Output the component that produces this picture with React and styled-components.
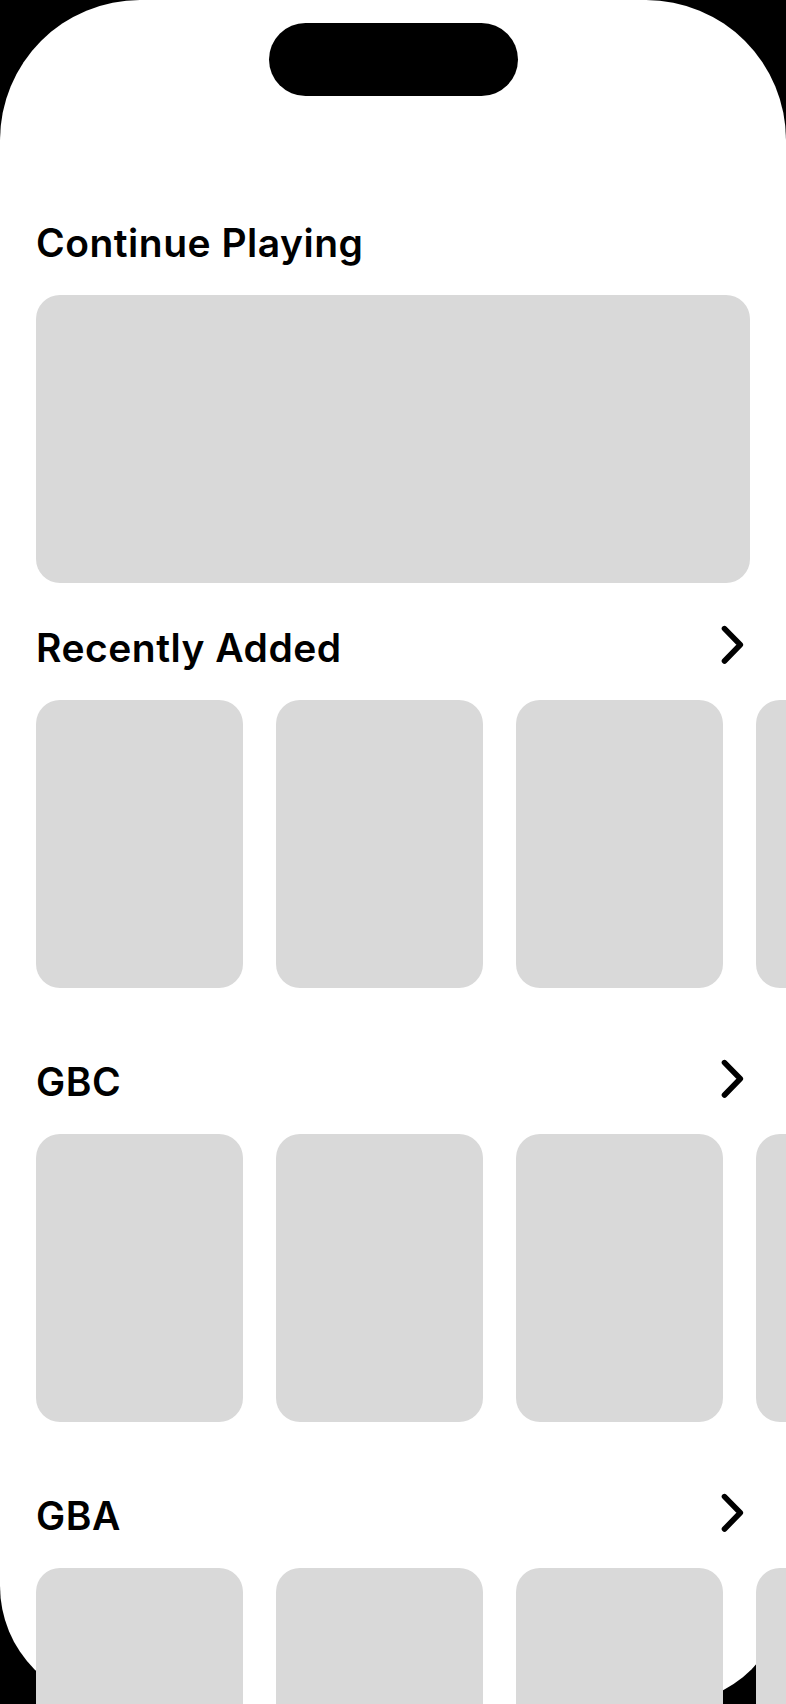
import styled, { createGlobalStyle } from "styled-components";

const GlobalStyle = createGlobalStyle`
  html, body {
    margin: 0;
    padding: 0;
    background: #000;
    overflow: hidden;
  }
  body {
    font-family: Inter, "Noto Sans", "Liberation Sans", sans-serif;
    -webkit-font-smoothing: antialiased;
  }
`;

const Frame = styled.div`
  width: 786px;
  height: 1704px;
  overflow: hidden;
  background: #000;
`;

const Screen = styled.div`
  width: 100%;
  height: 100%;
  background: #fff;
  border-radius: 140px 140px 118px 118px;
`;

const StatusArea = styled.div`
  display: flex;
  justify-content: center;
  padding-top: 23px;
`;

const Island = styled.div`
  width: 249px;
  height: 73px;
  border-radius: 37px;
  background: #000;
`;

const Content = styled.main`
  padding: 122px 0 0 36px;
`;

const Section = styled.section`
  margin-bottom: ${({ $gap }) => $gap}px;
`;

const Header = styled.div`
  display: flex;
  align-items: center;
  justify-content: space-between;
  height: 44px;
  margin-right: 36px;
  margin-bottom: 33px;
`;

const Title = styled.h2`
  margin: 5px 0 0;
  font-size: 39px;
  line-height: 44px;
  font-weight: 600;
  letter-spacing: 0.5px;
  color: #000;
  white-space: nowrap;
`;

const More = styled.svg`
  width: 24px;
  height: 40px;
  margin-right: 6px;
  flex: none;
`;

const HeroCard = styled.div`
  width: 714px;
  height: 288px;
  border-radius: 24px;
  background: #d9d9d9;
`;

const Shelf = styled.div`
  display: flex;
  gap: 33px;
  overflow: hidden;
`;

const GameCard = styled.div`
  flex: 0 0 207px;
  height: 288px;
  border-radius: 24px;
  background: #d9d9d9;
`;

const Chevron = () => (
  <More viewBox="0 0 24 40" fill="none">
    <path
      d="M4.5 3.6 L20.3 19.8 L4.5 36"
      stroke="#000"
      strokeWidth="5.6"
      strokeLinecap="round"
      strokeLinejoin="round"
    />
  </More>
);

const shelves = ["Recently Added", "GBC", "GBA"];

export default function App() {
  return (
    <Frame>
      <GlobalStyle />
      <Screen>
        <StatusArea>
          <Island />
        </StatusArea>
        <Content>
          <Section $gap={40}>
            <Header>
              <Title>Continue Playing</Title>
            </Header>
            <HeroCard />
          </Section>
          {shelves.map((name) => (
            <Section key={name} $gap={69}>
              <Header>
                <Title>{name}</Title>
                <Chevron />
              </Header>
              <Shelf>
                {[0, 1, 2, 3].map((i) => (
                  <GameCard key={i} />
                ))}
              </Shelf>
            </Section>
          ))}
        </Content>
      </Screen>
    </Frame>
  );
}
